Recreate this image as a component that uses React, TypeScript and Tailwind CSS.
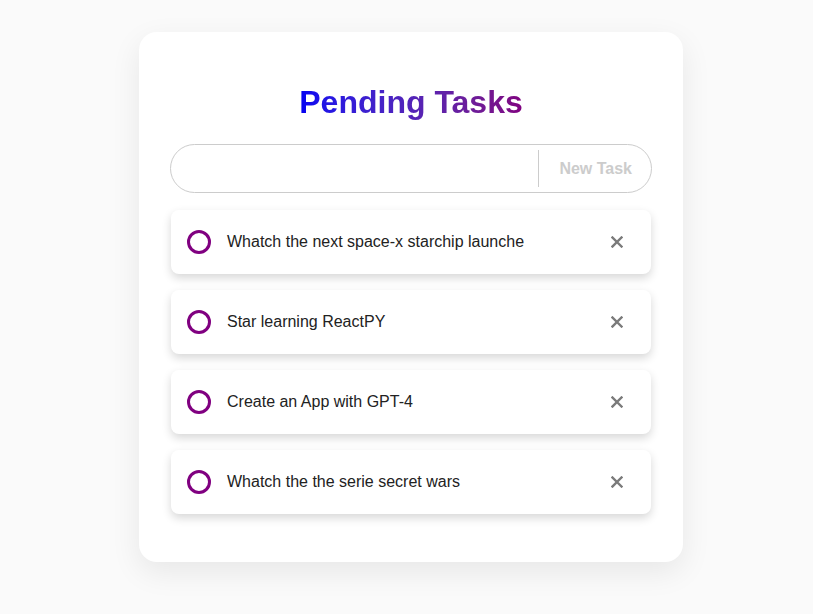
import React from 'react';

const tasks = [
  'Whatch the next space-x starchip launche',
  'Star learning ReactPY',
  'Create an App with GPT-4',
  'Whatch the the serie secret wars',
];

const CloseIcon: React.FC = () => (
  <svg width="12" height="12" viewBox="0 0 12 12" fill="none">
    <path d="M1.5 1.5 L10.5 10.5 M10.5 1.5 L1.5 10.5" stroke="#7a7a7a" strokeWidth="2.4" strokeLinecap="square" />
  </svg>
);

export default function App() {
  return (
    <div className="min-h-screen bg-[#fafafa] pt-8 pl-[9px] flex justify-center font-['Liberation_Sans',Arial,sans-serif]">
      <div className="w-[544px] h-[530px] bg-white rounded-[18px] shadow-[0_10px_30px_rgba(0,0,0,0.08)] px-[31px] pt-[52px]">

        {/* Title */}
        <div className="flex justify-center">
          <h1 className="text-[32px] leading-9 font-bold bg-gradient-to-r from-[#0000f2] to-[#800080] bg-clip-text text-transparent">
            Pending Tasks
          </h1>
        </div>

        {/* Input */}
        <div className="mt-6 h-[49px] rounded-full border border-[#cccccc] flex items-center">
          <input className="flex-1 h-full bg-transparent outline-none px-5 text-base" />
          <div className="h-[37px] border-l border-[#cccccc] flex items-center pl-5 pr-[19px] text-base font-bold text-[#cccccc]">
            New Task
          </div>
        </div>

        {/* Task list */}
        <ul className="mt-[17px] flex flex-col gap-4 px-px">
          {tasks.map((t) => (
            <li
              key={t}
              className="h-16 bg-white rounded-lg shadow-[0_4px_10px_rgba(0,0,0,0.16)] flex items-center pl-4 pr-[28px]"
            >
              <span className="w-6 h-6 rounded-full border-[3px] border-[#800080] shrink-0" />
              <span className="ml-4 flex-1 text-base text-[#222]">{t}</span>
              <CloseIcon />
            </li>
          ))}
        </ul>

      </div>
    </div>
  );
}
